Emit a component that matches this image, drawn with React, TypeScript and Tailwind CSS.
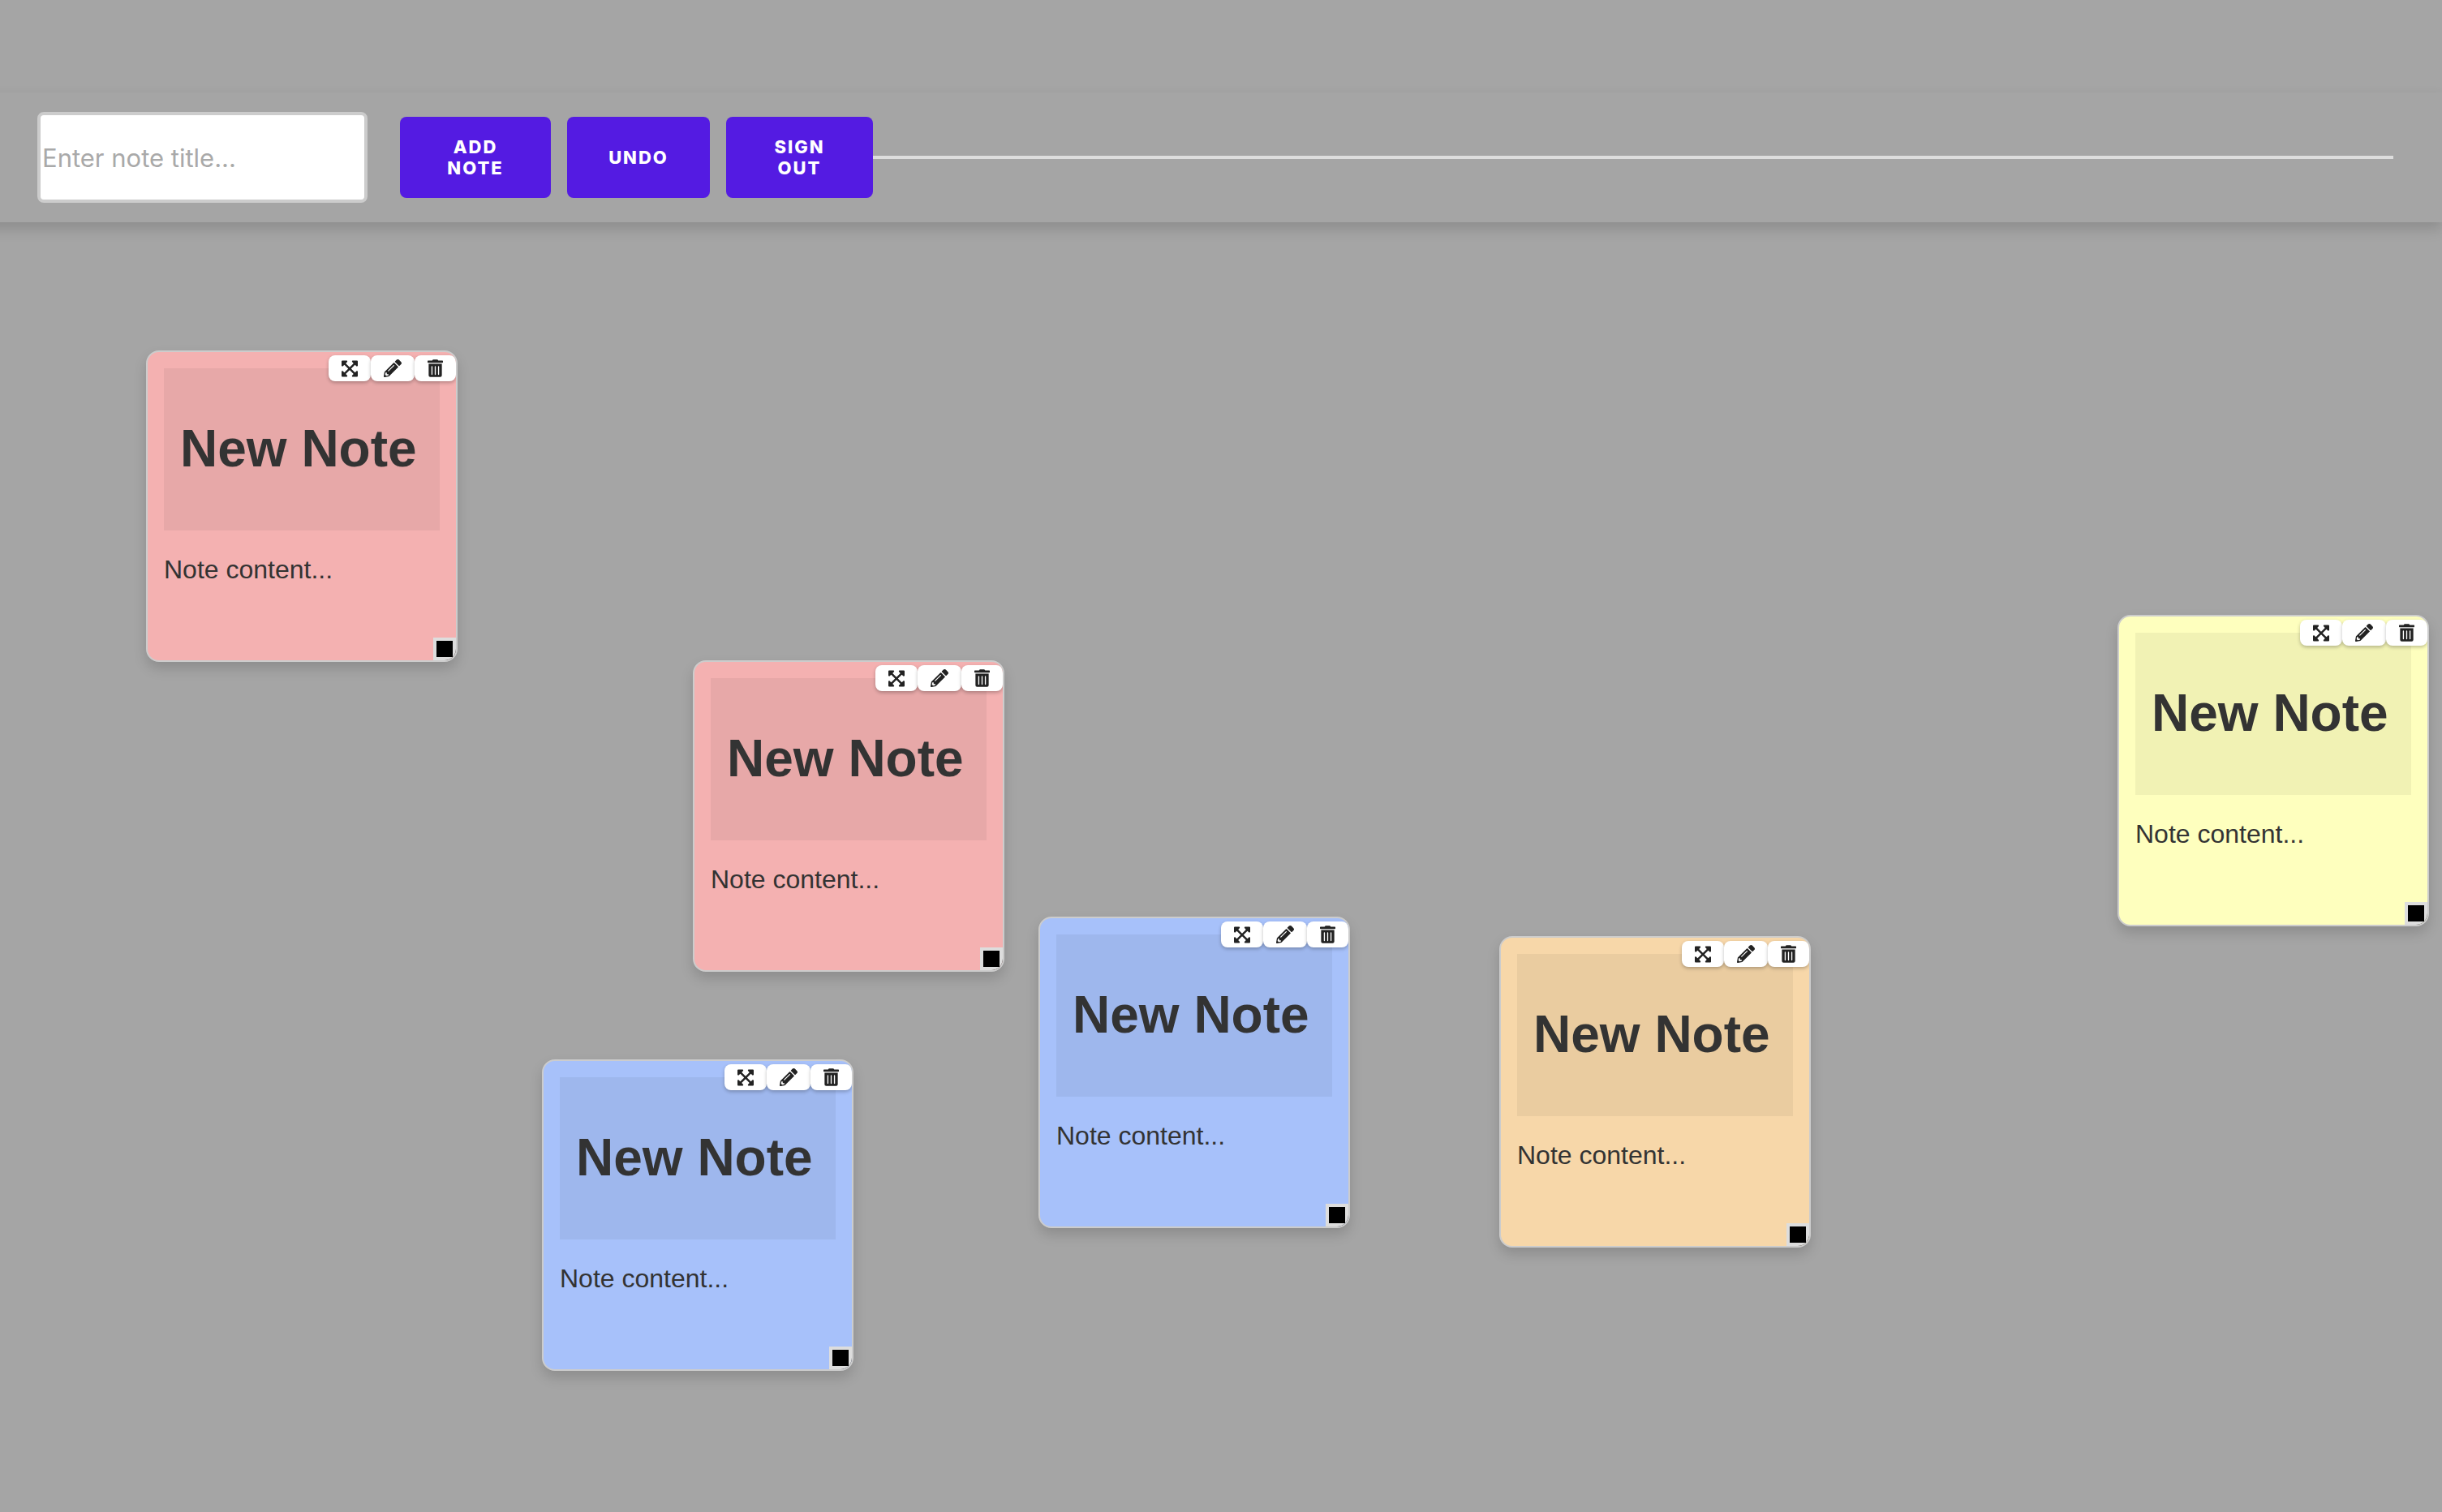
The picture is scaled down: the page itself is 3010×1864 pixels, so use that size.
import { FaExpandArrowsAlt, FaPencilAlt, FaTrashAlt } from 'react-icons/fa';

type NoteData = { id: number; x: number; y: number; color: string };

const notes: NoteData[] = [
  { id: 1, x: 180, y: 158, color: 'bg-[#f4b1b1]' },
  { id: 2, x: 854, y: 540, color: 'bg-[#f4b1b1]' },
  { id: 3, x: 2610, y: 484, color: 'bg-[#feffbe]' },
  { id: 4, x: 1280, y: 856, color: 'bg-[#a7c1fa]' },
  { id: 5, x: 1848, y: 880, color: 'bg-[#f7d7a9]' },
  { id: 6, x: 668, y: 1032, color: 'bg-[#a7c1fa]' },
];

const toolButton =
  'flex h-8 items-center justify-center rounded-[8px] bg-white px-4 text-[#222222] shadow-[0_2px_4px_rgba(0,0,0,0.25)]';

const actionButton =
  'h-[100px] rounded-[8px] bg-[#541be2] text-center text-[22px] leading-[26px] font-extrabold tracking-[2px] text-white uppercase';

function Note({ note }: { note: NoteData }) {
  return (
    <article
      className={`absolute h-96 w-96 overflow-hidden rounded-[16px] border-2 border-[#cccccc] p-5 text-[#333333] shadow-[0_8px_16px_rgba(0,0,0,0.15)] ${note.color}`}
      style={{ left: note.x, top: note.y }}
    >
      <div className="absolute top-1 right-0 flex">
        <button type="button" aria-label="Move note" className={toolButton}>
          <FaExpandArrowsAlt className="h-[23px] w-5" />
        </button>
        <button type="button" aria-label="Edit note" className={toolButton}>
          <FaPencilAlt className="h-[22px] w-[22px]" />
        </button>
        <button type="button" aria-label="Delete note" className={toolButton}>
          <FaTrashAlt className="h-[22px] w-[19px]" />
        </button>
      </div>
      <header className="h-[200px] bg-black/5 px-5 pt-[61px]">
        <h1 className="text-[64px] leading-[76px] font-bold whitespace-nowrap">New Note</h1>
      </header>
      <p className="mt-[30px] text-[32px] leading-9">Note content...</p>
      <div className="absolute right-0 bottom-0 h-7 w-7 border-4 border-[#dddddd] bg-black" />
    </article>
  );
}

export default function App() {
  return (
    <div className="flex min-h-screen flex-col overflow-hidden bg-[#a5a5a5] pt-[114px] font-['Liberation_Sans',Arial,sans-serif]">
      <header className="-ml-5 flex items-center bg-[#a5a5a5] py-6 pr-[60px] pl-[66px] font-[Inter,sans-serif] shadow-[0_8px_16px_rgba(0,0,0,0.15)]">
        <input
          type="text"
          aria-label="Note title"
          placeholder="Enter note title..."
          className="h-28 w-[407px] rounded-[8px] border-4 border-[#cccccc] bg-white px-0.5 text-[31px] text-[#333333] placeholder:text-[#a9a9a9]"
        />
        <div className="ml-10 flex gap-5">
          <button type="button" className={`${actionButton} w-[186px] px-12`}>Add Note</button>
          <button type="button" className={`${actionButton} w-[176px] px-12`}>Undo</button>
          <button type="button" className={`${actionButton} w-[181px] px-12`}>Sign Out</button>
        </div>
        <hr className="h-1 flex-1 border-0 bg-[#dddddd]" />
      </header>
      <main className="relative flex-1">
        {notes.map((note) => (
          <Note key={note.id} note={note} />
        ))}
      </main>
    </div>
  );
}
